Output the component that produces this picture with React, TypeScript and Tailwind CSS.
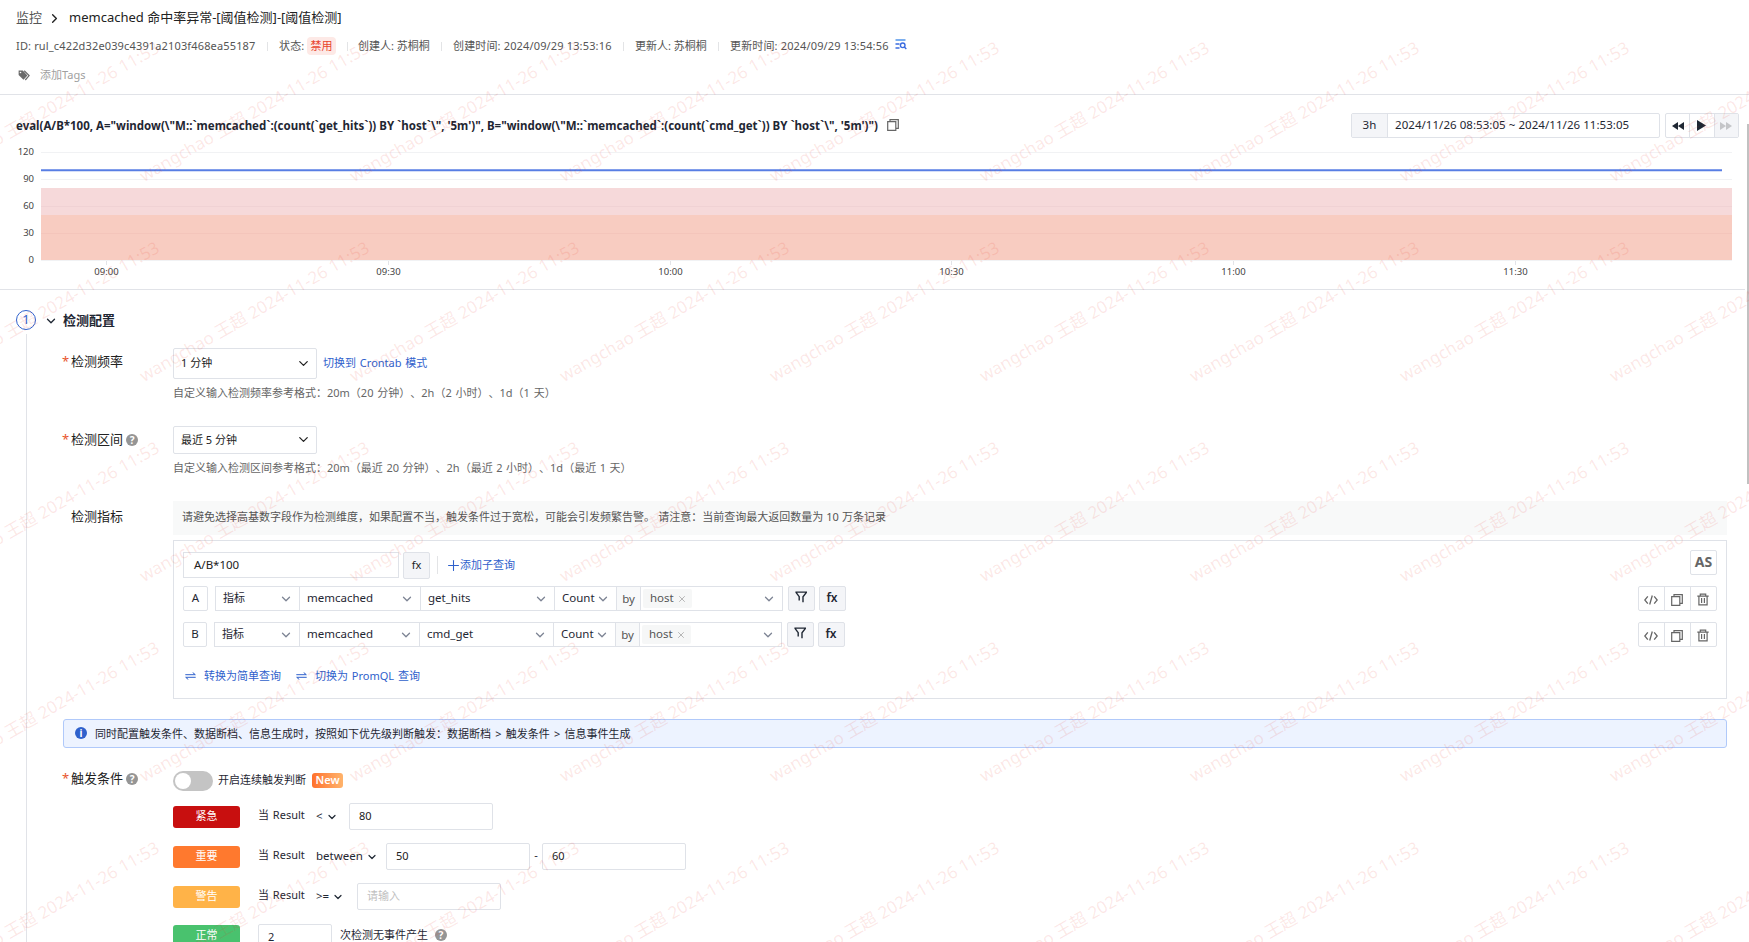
import React from 'react';
import { ChevronDown, ChevronRight, Plus, X } from 'lucide-react';

const WATERMARK_TEXT = 'wangchao 王超 2024-11-26 11:53';

const yTicks = [120, 90, 60, 30, 0];
const xTicks = [
    { label: '09:00', x: 65.5 },
    { label: '09:30', x: 347.5 },
    { label: '10:00', x: 629.5 },
    { label: '10:30', x: 910.5 },
    { label: '11:00', x: 1192.5 },
    { label: '11:30', x: 1474.5 },
];

const CopyIcon = ({ className }: { className?: string }) => (
    <svg viewBox="0 0 12 12" className={className} fill="none" stroke="currentColor" strokeWidth="1.2">
        <path d="M0.7 2.7h8.1v8.6H0.7z" />
        <path d="M3 2.5V0.7h8.3v8.6H9" />
    </svg>
);

const TrashIcon = () => (
    <svg viewBox="0 0 12 13" className="w-3 h-[13px]" fill="none" stroke="currentColor" strokeWidth="1.2">
        <path d="M0.3 3.1h11.4M3.3 2.9V1.1h5.4v1.8M1.9 3.3v8.6h8.2V3.3M4.6 5v5M7.4 5v5" />
    </svg>
);

const CodeIcon = () => (
    <svg viewBox="0 0 14 10" className="w-[14px] h-[10px]" fill="none" stroke="currentColor" strokeWidth="1.3">
        <path d="M3.8 1.3L0.8 5l3 3.7M10.2 1.3l3 3.7-3 3.7M8.3 0.5L5.7 9.5" />
    </svg>
);

const FilterIcon = () => (
    <svg viewBox="0 0 12 12" className="w-3 h-3" fill="none" stroke="currentColor" strokeWidth="1.4">
        <path d="M0.4 1.1h11.2L8 5.7v5.6M1 1.3l3.2 4.4v3.8" />
    </svg>
);

const SwapIcon = () => (
    <svg viewBox="0 0 11 8" className="w-[11px] h-2" fill="none" stroke="currentColor" strokeWidth="1">
        <path d="M0.3 2.7h10L7.7 0.5M10.7 5.3h-10l2.6 2.2" />
    </svg>
);

const LogIcon = () => (
    <svg viewBox="0 0 12 11" className="w-3 h-[11px] mb-[3px]" fill="none">
        <path d="M0.5 1h10" stroke="#6ea6ee" strokeWidth="1.8" />
        <path d="M0.5 5h4M0.5 9h4" stroke="#3b6ce0" strokeWidth="1.4" />
        <circle cx="7.7" cy="6.3" r="2.3" stroke="#3b6ce0" strokeWidth="1.4" />
        <path d="M9.4 8.1l1.9 2" stroke="#3b6ce0" strokeWidth="1.4" />
    </svg>
);

const TagIcon = () => (
    <svg viewBox="0 0 12 11" className="w-3 h-[11px]">
        <path d="M0.6 0.6h4.2l4.6 4.8-3.9 4.4L0.6 5z" fill="#6b6b6b" />
        <path d="M6.2 0.8l4.9 4.8-3.8 4.4" fill="none" stroke="#6b6b6b" strokeWidth="1.2" />
        <circle cx="2.5" cy="2.5" r="0.8" fill="#fff" />
    </svg>
);

const HelpIcon = () => (
    <span className="flex items-center justify-center w-3 h-3 rounded-full bg-[#959595] text-white text-[10px] leading-none font-bold">?</span>
);

const Watermark = () => {
    const marks: { x: number; y: number }[] = [];
    for (let row = 0; row < 6; row++) {
        for (let col = -2; col < 9; col++) {
            marks.push({ x: 145 + col * 210, y: 184 + row * 200 });
        }
    }
    return (
        <div className="absolute inset-0 overflow-hidden pointer-events-none select-none">
            {marks.map(mark => (
                <span
                    key={`${mark.x}-${mark.y}`}
                    className="absolute origin-bottom-left -rotate-30 whitespace-nowrap text-[17px] leading-4 text-[#e8382a]/12"
                    style={{ left: mark.x, top: mark.y - 16 }}
                >
                    {WATERMARK_TEXT}
                </span>
            ))}
        </div>
    );
};

const Divider = ({ className = '' }: { className?: string }) => (
    <span className={`w-px h-[9px] bg-[#e3e4e6] shrink-0 ${className}`} />
);

const Header = () => (
    <header className="h-[95px] border-b border-[#e1e3e8] pl-4 shrink-0">
        <div className="flex items-center h-[35px] text-[13px] text-[#222]">
            <span className="w-[26px] text-[#555]">监控</span>
            <ChevronRight className="w-[15px] h-[15px] ml-[5px] mt-px" strokeWidth={2.2} />
            <span className="ml-[7px] whitespace-nowrap">memcached 命中率异常-[阈值检测]-[阈值检测]</span>
        </div>
        <div className="flex items-center h-[22px] text-[11px] tracking-[0.15px] text-[#555] whitespace-nowrap">
            <span className="w-[251px]">ID: rul_c422d32e039c4391a2103f468ea55187</span>
            <Divider />
            <span className="w-[28px] ml-[11px]">状态:</span>
            <span className="flex items-center justify-center w-[29px] h-[18px] bg-[#fde9e6] rounded-sm tracking-normal text-[#e8452c]">禁用</span>
            <Divider className="ml-[11px]" />
            <span className="w-[93px] pl-[10px] tracking-normal">创建人: 苏桐桐</span>
            <Divider />
            <span className="w-[181px] pl-[11px]">创建时间: 2024/09/29 13:53:16</span>
            <Divider />
            <span className="w-[94px] pl-[11px] tracking-normal">更新人: 苏桐桐</span>
            <Divider />
            <span className="w-[176px] pl-[11px]">更新时间: 2024/09/29 13:54:56</span>
            <LogIcon />
        </div>
        <div className="flex items-center h-[36px] pl-[2px] text-[11px] text-[#a0a0a0]">
            <TagIcon />
            <span className="ml-[10px]">添加Tags</span>
        </div>
    </header>
);

const PlayerButtons = () => (
    <div className="flex w-[74px] h-[25px] mb-px ml-[5px] border border-[#dfe2e8] rounded-xs divide-x divide-[#dfe2e8] text-[#1f2733]">
        <span className="flex flex-1 items-center justify-center">
            <svg viewBox="0 0 12 8" className="w-3 h-2" fill="currentColor"><path d="M6 0v8L0 4zM12 0v8L6 4z" /></svg>
        </span>
        <span className="flex flex-1 items-center justify-center">
            <svg viewBox="0 0 9 11" className="w-[9px] h-[11px]" fill="currentColor"><path d="M0 0l9 5.5L0 11z" /></svg>
        </span>
        <span className="flex flex-1 items-center justify-center bg-[#f4f5f8] text-[#c4c5c8]">
            <svg viewBox="0 0 12 8" className="w-3 h-2" fill="currentColor"><path d="M0 0v8l6-4zM6 0v8l6-4z" /></svg>
        </span>
    </div>
);

const Chart = () => (
    <div className="flex h-[131px] pt-[5px]">
        <div className="flex flex-col w-[34px] shrink-0 text-right text-[9.5px] leading-[27px] text-[#444] -mt-[14px]">
            {yTicks.map(tick => <span key={tick} className="h-[27px]">{tick}</span>)}
        </div>
        <svg width="1700" height="126" viewBox="0 0 1700 126" className="ml-[7px] shrink-0" fontSize="9.5" fill="#444">
            {[0, 27, 54, 81, 108].map(y => <path key={y} d={`M0 ${y + 0.5}h1691`} stroke="#f1f2f4" />)}
            <rect x="0" y="36" width="1691" height="27" fill="#f6d9da" />
            <rect x="0" y="63" width="1691" height="45" fill="#f8ccc1" />
            <path d="M0 54.5h1691" stroke="#f0d2d4" />
            <path d="M0 81.5h1691" stroke="#f4c5bb" />
            <path d="M0 18.3h1681" stroke="#587ee4" strokeWidth="2" />
            {xTicks.map(tick => (
                <g key={tick.label}>
                    <path d={`M${tick.x} 109v4`} stroke="#e3e4e8" />
                    <text x={tick.x} y="123" textAnchor="middle">{tick.label}</text>
                </g>
            ))}
        </svg>
    </div>
);

const QueryPanel = () => (
    <section className="w-[1745px] h-[195px] border-b border-[#e1e3e8] pt-[18px] shrink-0">
        <div className="flex items-center h-[26px] pl-4 text-[#1f2733] whitespace-nowrap">
            <span className="w-[871px] text-[11.5px] font-bold">
                {'eval(A/B*100, A="window(\\"M::`memcached`:(count(`get_hits`)) BY `host`\\", \'5m\')", B="window(\\"M::`memcached`:(count(`cmd_get`)) BY `host`\\", \'5m\')")'}
            </span>
            <CopyIcon className="w-3 h-3 mb-[2px] text-[#666]" />
            <div className="flex w-[309px] h-[25px] mb-px ml-auto border border-[#dfe2e8] rounded-xs text-[11.5px] tracking-[0.05px]">
                <span className="flex items-center justify-center w-[36px] pb-px bg-[#f4f5f8] border-r border-[#dfe2e8]">3h</span>
                <span className="flex items-center pl-[7px] pb-px">2024/11/26 08:53:05 ~ 2024/11/26 11:53:05</span>
            </div>
            <PlayerButtons />
            <span className="w-[6px]" />
        </div>
        <div className="h-[8px]" />
        <Chart />
    </section>
);

const Label = ({ text, required, help }: { text: string; required?: boolean; help?: boolean }) => (
    <div className="flex items-center w-[110px] h-[28px] text-[13px] text-[#222] shrink-0">
        <span className="w-2 -ml-px mr-px text-[#e8552c]">{required ? '*' : ''}</span>
        <span>{text}</span>
        {help && <span className="ml-[3px]"><HelpIcon /></span>}
    </div>
);

const SelectBox = ({ text, className }: { text: string; className: string }) => (
    <div className={`flex items-center justify-between w-[144px] border border-[#dfe2e8] rounded-xs pl-[7px] pr-[5px] text-[#222] ${className}`}>
        <span>{text}</span>
        <ChevronDown className="w-[15px] h-[15px] mb-px" strokeWidth={2} />
    </div>
);

interface QueryRowProps {
    name: string;
    metric: string;
    nameWidth: string;
    typeWidth: string;
    setWidth: string;
}

const Cell = ({ text, className }: { text: string; className: string }) => (
    <span className={`flex items-center justify-between border-r border-[#dfe2e8] pl-[7px] pr-[6px] shrink-0 ${className}`}>
        <span className="pb-px">{text}</span>
        <ChevronDown className="w-[14px] h-[14px] mt-px text-[#7d8494]" strokeWidth={2.2} />
    </span>
);

const QueryRow = ({ name, metric, nameWidth, typeWidth, setWidth }: QueryRowProps) => (
    <div className="flex h-[25px] text-[11.5px] text-[#1f2733]">
        <span className={`flex items-center justify-center border border-[#dfe2e8] rounded-xs shrink-0 pb-px ${nameWidth}`}>{name}</span>
        <div className="flex h-[25px] ml-[7px] border border-[#dfe2e8] shrink-0">
            <Cell text="指标" className={`text-[11px] ${typeWidth}`} />
            <Cell text="memcached" className={setWidth} />
            <Cell text={metric} className="w-[134px]" />
            <Cell text="Count" className="w-[62px]" />
            <span className="flex items-center justify-center w-6 bg-[#f8f9fa] border-r border-[#dfe2e8] text-[#555]">by</span>
            <span className="flex items-center w-[141px] pl-[2px] pr-[6px]">
                <span className="flex items-center w-[49px] h-[19px] pl-[7px] pb-px bg-[#f6f7f7] rounded-xs text-[#555]">
                    host<X className="w-[10px] h-[10px] ml-[3px] mt-px text-[#aaa]" strokeWidth={2} />
                </span>
                <ChevronDown className="w-[14px] h-[14px] mt-px ml-auto text-[#7d8494]" strokeWidth={2.2} />
            </span>
        </div>
        <span className="flex items-center justify-center w-[27px] ml-[5px] pb-[3px] pr-px bg-[#f4f5f8] border border-[#dfe2e8] rounded-xs"><FilterIcon /></span>
        <span className="flex items-center justify-center w-[27px] ml-1 pb-[2px] pr-px bg-[#f4f5f8] border border-[#dfe2e8] rounded-xs text-xs font-semibold">fx</span>
        <div className="flex w-[79px] ml-auto border border-[#dfe2e8] rounded-xs divide-x divide-[#dfe2e8] text-[#666]">
            <span className="flex flex-1 items-center justify-center pt-[2px] pr-px"><CodeIcon /></span>
            <span className="flex flex-1 items-center justify-center pt-[2px] pr-px"><CopyIcon className="w-3 h-3" /></span>
            <span className="flex flex-1 items-center justify-center pt-[2px] pr-px"><TrashIcon /></span>
        </div>
    </div>
);

const MetricEditor = () => (
    <div className="w-[1554px] h-[159px] mt-[5px] border border-[#dfe2e8] px-[9px] pt-[11px]">
        <div className="flex h-[27px]">
            <span className="flex items-center w-[216px] h-[26px] pl-[10px] border border-[#dfe2e8] text-[11.5px] text-[#222]">A/B*100</span>
            <span className="flex items-center justify-center w-[27px] ml-1 bg-[#f4f5f8] border border-[#dfe2e8] rounded-xs text-[#222]">fx</span>
            <Divider className="h-[18px] ml-[7px] mt-1" />
            <span className="flex items-center ml-[7px] text-[#2f61cc]">
                <Plus className="w-[17px] h-[17px] -mr-[2px]" strokeWidth={1.5} />添加子查询
            </span>
            <span className="flex items-center justify-center w-[27px] h-[25px] -mt-0.5 ml-auto pb-[2px] border border-[#dfe2e8] rounded-xs text-[14px] font-bold text-[#666]">AS</span>
        </div>
        <div className="flex flex-col gap-[11px] mt-[7px]">
            <QueryRow name="A" metric="get_hits" nameWidth="w-[25px]" typeWidth="w-[84px]" setWidth="w-[121px]" />
            <QueryRow name="B" metric="cmd_get" nameWidth="w-6" typeWidth="w-[85px]" setWidth="w-[120px]" />
        </div>
        <div className="flex items-center h-[20px] mt-[19px] text-[#2f61cc] [word-spacing:1px]">
            <span className="flex items-center w-[113px] pl-[2px]"><SwapIcon /><span className="ml-2">转换为简单查询</span></span>
            <SwapIcon /><span className="ml-2">切换为 PromQL 查询</span>
        </div>
    </div>
);

const Operator = ({ text }: { text: string }) => (
    <span className="flex items-center text-[11.5px]">
        <span className="pb-[2px]">{text}</span>
        <ChevronDown className="w-3 h-3 ml-[3px]" strokeWidth={2.4} />
    </span>
);

const ValueInput = ({ value, placeholder }: { value?: string; placeholder?: string }) => (
    <span className="flex items-center w-[144px] h-[27px] pl-[9px] pb-px border border-[#dfe2e8] rounded-xs text-[#222]">
        {value ?? <span className="text-[#bfbfbf]">{placeholder}</span>}
    </span>
);

const Level = ({ name, color }: { name: string; color: string }) => (
    <span className={`flex items-center justify-center w-[67px] h-[22px] pb-px rounded-[3px] text-white shrink-0 ${color}`}>{name}</span>
);

const TriggerConditions = () => (
    <div className="text-[11px] text-[#1f2733]">
        <div className="flex items-center h-[28px] mt-px">
            <span className="flex items-center w-10 h-5 pl-[2px] rounded-full bg-[#c4c4c4]">
                <span className="w-4 h-4 rounded-full bg-white" />
            </span>
            <span className="w-[99px] pl-[5px] pb-px whitespace-nowrap">开启连续触发判断</span>
            <span className="flex items-center justify-center w-[31px] h-[15px] mb-px rounded-[3px] bg-linear-to-r from-[#ff702b] to-[#ffb36b] text-white font-semibold">New</span>
        </div>
        <div className="flex flex-col gap-[13px] mt-[8px]">
            <div className="flex items-center h-[27px]">
                <Level name="紧急" color="bg-[#c80f0f]" />
                <span className="w-[58px] ml-[18px] pb-[2px] [word-spacing:1px]">当 Result</span>
                <span className="w-[33px]"><Operator text="<" /></span>
                <ValueInput value="80" />
            </div>
            <div className="flex items-center h-[27px]">
                <Level name="重要" color="bg-[#ff792e]" />
                <span className="w-[58px] ml-[18px] pb-[2px] [word-spacing:1px]">当 Result</span>
                <span className="w-[70px]"><Operator text="between" /></span>
                <ValueInput value="50" />
                <span className="w-3 pb-[2px] text-center">-</span>
                <ValueInput value="60" />
            </div>
            <div className="flex items-center h-[27px]">
                <Level name="警告" color="bg-[#ffb348]" />
                <span className="w-[58px] ml-[18px] pb-[2px] [word-spacing:1px]">当 Result</span>
                <span className="w-[41px]"><Operator text=">=" /></span>
                <ValueInput placeholder="请输入" />
            </div>
            <div className="flex items-start h-[27px]">
                <span className="mt-[2px]"><Level name="正常" color="bg-[#49c26e]" /></span>
                <span className="flex items-center w-[74px] h-[27px] pl-[9px] ml-[18px] mt-px border border-[#dfe2e8] rounded-xs">2</span>
                <span className="w-[103px] h-[22px] leading-[22px] mt-px pl-2">次检测无事件产生</span>
                <span className="mt-[6px]"><HelpIcon /></span>
            </div>
        </div>
    </div>
);

const DetectionConfig = () => (
    <section className="flex flex-1 pl-4 pt-5 min-h-0">
        <div className="flex flex-col items-center w-5 shrink-0">
            <span className="flex items-center justify-center w-5 h-5 border border-[#2f61cc] rounded-full text-[13px] text-[#2f61cc] shrink-0">1</span>
            <span className="w-px flex-1 mt-1 bg-[#e1e3e8]" />
        </div>
        <div className="pl-[8px] text-[11px] whitespace-nowrap">
            <div className="flex items-center h-5 text-[13px] font-bold text-[#1f2733]">
                <ChevronDown className="w-[14px] h-[14px] mt-[2px] mr-[5px]" strokeWidth={2.2} />
                <span className="pt-px">检测配置</span>
            </div>
            <div className="pl-[19px]">
                <div className="flex mt-[18px] h-[78px]">
                    <Label text="检测频率" required />
                    <div>
                        <div className="flex items-center">
                            <SelectBox text="1 分钟" className="h-[31px]" />
                            <span className="ml-[6px] text-[#2f61cc] [word-spacing:1px]">切换到 Crontab 模式</span>
                        </div>
                        <p className="mt-[5px] h-[18px] leading-[18px] text-[#666] [word-spacing:1px]">自定义输入检测频率参考格式：20m（20 分钟）、2h（2 小时）、1d（1 天）</p>
                    </div>
                </div>
                <div className="flex h-[75px]">
                    <Label text="检测区间" required help />
                    <div>
                        <SelectBox text="最近 5 分钟" className="h-[28px]" />
                        <p className="mt-[5px] h-[18px] leading-[18px] text-[#666] [word-spacing:0.7px]">自定义输入检测区间参考格式：20m（最近 20 分钟）、2h（最近 2 小时）、1d（最近 1 天）</p>
                    </div>
                </div>
                <div className="flex h-[218px]">
                    <div className="pt-[2px]"><Label text="检测指标" /></div>
                    <div>
                        <p className="flex items-center w-[1554px] h-[34px] pl-[9px] pb-px bg-[#f8f9f9] text-[#555] [word-spacing:0.3px]">
                            请避免选择高基数字段作为检测维度，如果配置不当，触发条件过于宽松，可能会引发频繁告警。 请注意：当前查询最大返回数量为 10 万条记录
                        </p>
                        <MetricEditor />
                    </div>
                </div>
                <div className="flex items-center w-[1664px] h-[29px] pl-[11px] border border-[#b0c9fa] rounded-[3px] bg-[#edf3ff] text-[#1f2733] [word-spacing:1.4px]">
                    <span className="flex items-center justify-center w-3 h-3 mr-2 mb-px rounded-full bg-[#2f61cc] text-white text-[10px] leading-none font-bold">i</span>
                    <span className="pt-px">同时配置触发条件、数据断档、信息生成时，按照如下优先级判断触发：数据断档 &gt; 触发条件 &gt; 信息事件生成</span>
                </div>
                <div className="flex mt-[17px]">
                    <Label text="触发条件" required help />
                    <div className="pt-px"><TriggerConditions /></div>
                </div>
            </div>
        </div>
    </section>
);

const App: React.FC = () => {
    return (
        <div className="relative flex flex-col w-[1749px] h-[942px] overflow-hidden bg-white font-[family-name:'Noto_Sans','Noto_Sans_CJK_SC',sans-serif] [text-spacing-trim:space-all]">
            <Header />
            <QueryPanel />
            <DetectionConfig />
            <div className="absolute right-0 top-[124px] w-0.5 h-[360px] bg-[#c1c1c1]" />
            <Watermark />
        </div>
    );
};

export default App;
